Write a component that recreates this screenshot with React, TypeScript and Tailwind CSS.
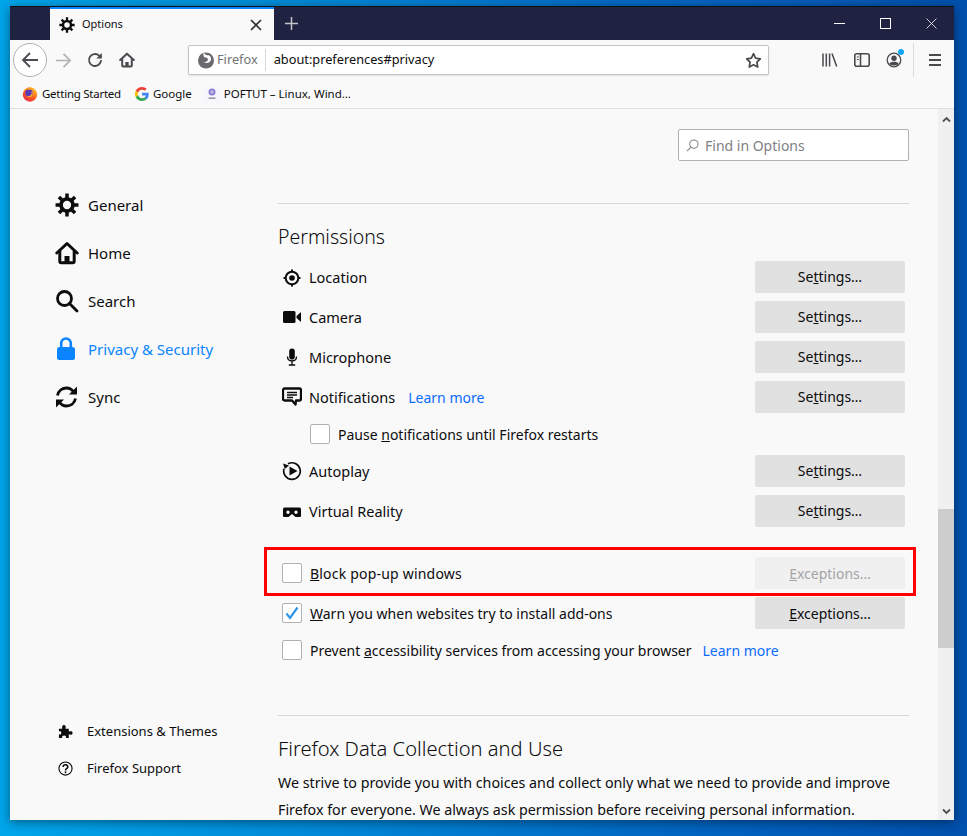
import type { ReactNode } from 'react';

function Gear({ size }: { size: number }) {
  return (
    <svg width={size} height={size} viewBox="0 0 22 22" fill="none" stroke="#0c0c0d">
      <circle cx="11" cy="11" r="5.500" strokeWidth="3.400" />
      <path
        strokeWidth="3.200"
        d="M11 .5v4M11 17.500v4M.5 11h4M17.500 11h4M3.600 3.600l2.900 2.900M15.500 15.500l2.900 2.900M18.400 3.600l-2.900 2.900M6.500 15.500l-2.900 2.900"
      />
    </svg>
  );
}

function HomeIcon({ size, color }: { size: number; color: string }) {
  return (
    <svg width={size} height={size} viewBox="0 0 24 24" fill="none" stroke={color} strokeWidth="3" strokeLinejoin="round">
      <path d="M1.800 12 12 2.500 22.200 12" strokeLinecap="round" />
      <path d="M4.800 10v10.200a1.500 1.500 0 0 0 1.500 1.500h11.400a1.500 1.500 0 0 0 1.500-1.500V10" />
      <rect x="9.500" y="15" width="5" height="7" fill={color} stroke="none" />
    </svg>
  );
}

function Firefox() {
  return (
    <svg width="16" height="16" viewBox="0 0 16 16">
      <defs>
        <linearGradient id="ff" x1="0.8" y1="0" x2="0.2" y2="1">
          <stop offset="0" stopColor="#ffcb2d" />
          <stop offset="0.5" stopColor="#ff6a1f" />
          <stop offset="1" stopColor="#e5203f" />
        </linearGradient>
      </defs>
      <circle cx="8" cy="8.500" r="7.200" fill="url(#ff)" />
      <circle cx="7" cy="7" r="3.800" fill="#5a3bb5" />
      <path d="M3 4c2-3.500 7-3.500 9 0-2-1-3-1-4 0-2-1-4-1-5 0z" fill="#ff9a24" />
      <path d="M9 5c2 1 2.500 4 .5 5.500C8 11.500 5 11 4 9c1 1 3 1.500 4.500.5C10 8.500 10 6 9 5z" fill="#ffb526" />
    </svg>
  );
}

function GoogleG() {
  return (
    <svg width="14" height="14" viewBox="0 0 48 48">
      <path fill="#ea4335" d="M24 9.500c3.500 0 6.700 1.200 9.200 3.600l6.900-6.900C35.900 2.400 30.500 0 24 0 14.600 0 6.500 5.400 2.600 13.200l8 6.200C12.500 13.700 17.800 9.500 24 9.500z" />
      <path fill="#4285f4" d="M47 24.500c0-1.600-.1-3.100-.4-4.500H24v9h12.900c-.6 3-2.200 5.400-4.700 7.100l7.700 6C44.400 38 47 31.800 47 24.500z" />
      <path fill="#fbbc05" d="M10.600 28.600a14.500 14.500 0 0 1 0-9.200l-8-6.200a24 24 0 0 0 0 21.600z" />
      <path fill="#34a853" d="M24 48c6.500 0 11.900-2.100 15.900-5.900l-7.700-6c-2.200 1.400-4.900 2.300-8.200 2.300-6.200 0-11.500-4.200-13.400-9.800l-8 6.200C6.500 42.600 14.600 48 24 48z" />
    </svg>
  );
}

function Poftut() {
  return (
    <svg width="16" height="16" viewBox="0 0 16 16">
      <rect width="16" height="16" fill="#f6f6fb" />
      <circle cx="8" cy="6" r="3.500" fill="#8d7fd0" />
      <path d="M6 6h4M8 4v4" stroke="#d9d4f2" strokeWidth="0.8" />
      <rect x="4.500" y="11.500" width="7" height="1.400" fill="#8a8aa0" />
    </svg>
  );
}

function PermissionIcon({ name }: { name: string }) {
  const c = '#0c0c0d';
  if (name === 'Location')
    return (
      <svg className="mt-[1px]" width="18" height="18" viewBox="0 0 18 18" fill="none">
        <circle cx="9" cy="9" r="6.300" stroke={c} strokeWidth="2" />
        <circle cx="9" cy="9" r="2.800" fill={c} />
        <path d="M9 .500v2.500M9 15v2.500M.500 9H3M15 9h2.500" stroke={c} strokeWidth="2" />
      </svg>
    );
  if (name === 'Camera')
    return (
      <svg width="18" height="18" viewBox="0 0 18 18" fill={c}>
        <rect x="0" y="3" width="12.500" height="12" rx="1.500" />
        <path d="M13.500 8 18 4v10l-4.500-4z" />
      </svg>
    );
  if (name === 'Microphone')
    return (
      <svg width="18" height="18" viewBox="0 0 18 18" fill="none">
        <rect x="6.200" y="0.500" width="5.600" height="11" rx="2.800" fill={c} />
        <path d="M4.500 8.500c0 6 9 6 9 0M9 13.500v3M5.800 17h6.400" stroke={c} strokeWidth="1.300" />
      </svg>
    );
  if (name === 'Notifications')
    return (
      <svg className="ml-[-1px]" width="20" height="20" viewBox="0 0 20 20" fill="none">
        <path d="M2.500 1.500h15a1.500 1.500 0 0 1 1.500 1.500v9a1.500 1.500 0 0 1-1.500 1.500H14l-.5 4-3.500-4H2.500A1.500 1.500 0 0 1 1 12V3a1.500 1.500 0 0 1 1.500-1.500z" stroke={c} strokeWidth="2.300" strokeLinejoin="round" />
        <path d="M5 5.500h10M5 8h10M5 10.500h6" stroke={c} strokeWidth="1.400" />
      </svg>
    );
  if (name === 'Autoplay')
    return (
      <svg className="ml-[-1px]" width="20" height="20" viewBox="0 0 20 20" fill="none">
        <path d="M6 2.800a8.300 8.300 0 1 1-4 5" stroke={c} strokeWidth="1.700" />
        <path d="M1 2.500 2.800 8 7 4.500z" fill={c} />
        <path d="M7.500 5.500 15.500 10l-8 4.500z" fill={c} />
      </svg>
    );
  return (
    <svg className="mt-[2px]" width="18" height="18" viewBox="0 0 18 18" fill={c}>
      <path
        fillRule="evenodd"
        d="M1.500 4.500h15a1.500 1.500 0 0 1 1.500 1.500v7a1 1 0 0 1-1 1h-4.500l-2-1.800a2 2 0 0 0-3 0l-2 1.800H1a1 1 0 0 1-1-1V6a1.500 1.500 0 0 1 1.500-1.500zM5 7.500a1.700 1.700 0 1 0 0 3.400 1.700 1.700 0 0 0 0-3.400zm8 0a1.700 1.700 0 1 0 0 3.400 1.700 1.700 0 0 0 0-3.400z"
      />
    </svg>
  );
}

function Checkbox({ checked }: { checked?: boolean }) {
  return (
    <span className="flex h-5 w-5 shrink-0 items-center justify-center rounded-[2px] border border-[#b1b1b3] bg-white">
      {checked && (
        <svg width="16" height="16" viewBox="0 0 16 16" fill="none" stroke="#2e95e8" strokeWidth="2.200">
          <path d="M2.500 8.500 6 13 13.500 2.500" />
        </svg>
      )}
    </span>
  );
}

function SideButton({ children, disabled }: { children: ReactNode; disabled?: boolean }) {
  return (
    <span
      className={`ml-auto mr-1 flex h-8 w-[150px] shrink-0 items-center justify-center rounded-[2px] ${
        disabled ? 'bg-[#f0f0f1] text-[#a4a4a6]' : 'bg-[#e1e1e2] text-[#0c0c0d]'
      }`}
    >
      {children}
    </span>
  );
}

const settingsLabel = (
  <span className="pb-[2px]">
    Se<u>t</u>tings…
  </span>
);

const exceptionsLabel = (
  <>
    <u>E</u>xceptions…
  </>
);

function PermissionRow({ name, extra }: { name: string; extra?: ReactNode }) {
  return (
    <div className="mb-2 flex h-8 items-center">
      <span className="flex w-[31px] shrink-0 items-center pl-[5px]">
        <PermissionIcon name={name} />
      </span>
      <span className="pt-[1px] text-[14.5px]">{name}</span>
      {extra}
      <SideButton>{settingsLabel}</SideButton>
    </div>
  );
}

function Category({ icon, label, active }: { icon: ReactNode; label: string; active?: boolean }) {
  return (
    <div className={`flex h-12 items-center ${active ? 'text-[#0a84ff]' : 'text-[#0c0c0d]'}`}>
      <span className="flex w-[33px] shrink-0 items-center">{icon}</span>
      <span className="text-[15px]">{label}</span>
    </div>
  );
}

export default function App() {
  return (
    <div
      className="h-[836px] w-[967px] overflow-hidden bg-[linear-gradient(90deg,#00a6ea_0%,#0090dc_25%,#0065c2_70%,#0050ad_100%)] pl-[10px] pt-[6px] text-[14px] text-[#0c0c0d]"
      style={{ fontFamily: '"Noto Sans", "Open Sans", sans-serif' }}
    >
      <div className="flex h-[814px] w-[944px] flex-col border-t border-[#101010] bg-[#f9f9fa] shadow-[0_2px_10px_rgba(0,0,0,0.45)]">
        {/* Title bar */}
        <div className="flex h-[33px] shrink-0 items-stretch bg-[#1f2240] pl-10 text-white">
          <div className="flex w-[224px] items-center border-t-2 border-[#0a84ff] bg-[#f9f9fa] pl-[9px] pr-3 text-[#0c0c0d]">
            <Gear size={16} />
            <span className="ml-[7px] text-[11px]">Options</span>
            <svg className="ml-auto" width="12" height="12" viewBox="0 0 12 12" stroke="#303033" strokeWidth="1.700">
              <path d="M1 1l10 10M11 1 1 11" />
            </svg>
          </div>
          <div className="flex w-[34px] items-center justify-center">
            <svg width="15" height="15" viewBox="0 0 15 15" stroke="#c4c4cc" strokeWidth="1.500">
              <path d="M7.500 1v13M1 7.500h13" />
            </svg>
          </div>
          <div className="ml-auto flex items-center">
            <span className="flex w-[46px] justify-center">
              <svg width="11" height="11" viewBox="0 0 11 11" stroke="#fff" strokeWidth="1">
                <path d="M0 5.500h11" />
              </svg>
            </span>
            <span className="flex w-[46px] justify-center">
              <svg width="11" height="11" viewBox="0 0 11 11" fill="none" stroke="#fff" strokeWidth="1">
                <rect x="0.500" y="0.500" width="10" height="10" />
              </svg>
            </span>
            <span className="flex w-[46px] justify-center">
              <svg width="11" height="11" viewBox="0 0 11 11" stroke="#fff" strokeWidth="0.800">
                <path d="M.5.500l10 10M10.500.500l-10 10" />
              </svg>
            </span>
          </div>
        </div>

        {/* Toolbar */}
        <div className="flex h-[40px] shrink-0 items-center pl-[3px]">
          <span className="flex h-[34px] w-[34px] items-center justify-center rounded-full border border-[#b1b1b3] bg-white">
            <svg width="18" height="18" viewBox="0 0 18 18" fill="none" stroke="#4a4a4f" strokeWidth="1.800">
              <path d="M17 9H2M9 2 2 9l7 7" />
            </svg>
          </span>
          <span className="ml-[7px] flex w-[18px] justify-center">
            <svg width="17" height="17" viewBox="0 0 18 18" fill="none" stroke="#b1b1b3" strokeWidth="1.800">
              <path d="M1 9h15M9 2l7 7-7 7" />
            </svg>
          </span>
          <span className="ml-[15px] flex w-4 justify-center">
            <svg width="16" height="16" viewBox="0 0 16 16" fill="none" stroke="#4a4a4f" strokeWidth="1.800">
              <path d="M14 8a6 6 0 1 1-1.800-4.300L14 5.500" />
              <path d="M14.800 1v5.500H9.300z" fill="#4a4a4f" stroke="none" />
            </svg>
          </span>
          <span className="ml-4 flex w-4 justify-center">
            <HomeIcon size={16} color="#4a4a4f" />
          </span>
          <div className="ml-[53px] flex h-[30px] w-[581px] items-center rounded-[2px] border border-[#c4c4c6] bg-white shadow-[0_1px_2px_rgba(0,0,0,0.1)]">
            <svg className="ml-2" width="18" height="18" viewBox="0 0 18 18">
              <circle cx="9" cy="9.500" r="8" fill="#6a6a6e" />
              <path d="M6.500 1.500c1 2.200 3.300 2.800 5 2.800 2.200.6 3.300 3.300 2.200 5.500a4.400 4.400 0 0 1-7.200.6c1.700 1.100 4.400.5 4.400-2.200 0-1.100-1.100-1.700-2.800-1.700C7 6.500 6 4.500 6.500 1.500z" fill="#fff" />
            </svg>
            <span className="ml-[2px] text-[12.75px] text-[#737373]">Firefox</span>
            <span className="ml-[7px] h-[22px] w-px bg-[#d7d7db]" />
            <span className="ml-2 text-[12.75px] text-[#0c0c0d]">about:preferences#privacy</span>
            <svg className="ml-auto mr-[6px]" width="17" height="17" viewBox="0 0 18 18" fill="none" stroke="#4a4a4f" strokeWidth="1.800" strokeLinejoin="round">
              <path d="M9 1.800l2.200 4.700 5 .7-3.600 3.600.9 5.100L9 13.500l-4.500 2.400.9-5.100L1.800 7.200l5-.7z" />
            </svg>
          </div>
          <span className="ml-[53px] flex w-4 justify-center">
            <svg width="16" height="16" viewBox="0 0 16 16" stroke="#4a4a4f" strokeWidth="1.500">
              <path d="M1 1.500v13M4.300 1.500v13M7.600 1.500v13M10 1.500l4.700 13" />
            </svg>
          </span>
          <span className="ml-4 flex w-4 justify-center">
            <svg width="16" height="16" viewBox="0 0 16 16" fill="none" stroke="#4a4a4f" strokeWidth="1.600">
              <rect x="0.800" y="1.800" width="14.400" height="12.400" rx="2" />
              <path d="M6.500 2v12" />
              <path d="M2.800 5h2M2.800 7.500h2" strokeWidth="1.100" />
            </svg>
          </span>
          <span className="relative ml-4 flex w-4 justify-center">
            <svg width="16" height="16" viewBox="0 0 16 16" fill="none">
              <circle cx="8" cy="8" r="6.800" stroke="#4a4a4f" strokeWidth="1.300" />
              <circle cx="8" cy="6.300" r="2.700" fill="#4a4a4f" />
              <path d="M3.300 11.800c1.500-2.600 7.900-2.600 9.400 0C11.500 14 4.500 14 3.300 11.800z" fill="#4a4a4f" />
            </svg>
            <span className="absolute right-[-2px] top-[-3px] h-[6px] w-[6px] rounded-full bg-[#0ea5f5]" />
          </span>
          <span className="ml-[11px] h-[34px] w-px bg-[#dcdcde]" />
          <span className="ml-[15px] flex w-3 flex-col gap-[3px]">
            <span className="h-[2px] bg-[#4a4a4f]" />
            <span className="h-[2px] bg-[#4a4a4f]" />
            <span className="h-[2px] bg-[#4a4a4f]" />
          </span>
        </div>

        {/* Bookmarks */}
        <div className="flex h-[29px] shrink-0 items-center border-b border-[#dfdfe0] pl-3 text-[11.5px]">
          <Firefox />
          <span className="ml-[4px] tracking-[-0.25px]">Getting Started</span>
          <span className="ml-[14px] flex">
            <GoogleG />
          </span>
          <span className="ml-[4px]">Google</span>
          <span className="ml-[12px] flex">
            <Poftut />
          </span>
          <span className="ml-[4px]">POFTUT – Linux, Wind…</span>
        </div>

        {/* Page */}
        <div className="flex min-h-0 flex-1">
          <div className="flex w-[268px] shrink-0 flex-col pb-[33px] pl-[45px] pt-[72px]">
            <Category icon={<Gear size={24} />} label="General" />
            <Category icon={<HomeIcon size={24} color="#0c0c0d" />} label="Home" />
            <Category
              icon={
                <svg width="24" height="24" viewBox="0 0 24 24" fill="none" stroke="#0c0c0d" strokeWidth="2.800">
                  <circle cx="9.500" cy="9.500" r="7" />
                  <path d="M14.500 14.500 22 22" strokeLinecap="round" />
                </svg>
              }
              label="Search"
            />
            <Category
              active
              icon={
                <svg width="24" height="24" viewBox="0 -1 24 24" fill="#0a84ff">
                  <path d="M6.200 10V5.300a4.800 4.800 0 0 1 9.600 0V10" fill="none" stroke="#0a84ff" strokeWidth="2.600" />
                  <rect x="2" y="9" width="18" height="13" rx="2.500" />
                </svg>
              }
              label="Privacy & Security"
            />
            <Category
              icon={
                <svg width="24" height="24" viewBox="0 0 24 24" fill="none" stroke="#0c0c0d" strokeWidth="2.800">
                  <path d="M2.500 10.500C3.500 5.500 7.500 3 11.500 3c3 0 5.500 1.500 7 4" />
                  <path d="M20.500 13.500c-1 5-5 7.500-9 7.500-3 0-5.500-1.500-7-4" />
                  <path d="M22 1.500v8h-8z" fill="#0c0c0d" stroke="none" />
                  <path d="M1 22.500v-8h8z" fill="#0c0c0d" stroke="none" />
                </svg>
              }
              label="Sync"
            />
            <div className="mt-auto flex h-[37px] items-center pl-[3px] text-[13px]">
              <svg width="15" height="15" viewBox="0 0 16 16" fill="#0c0c0d">
                <path d="M1 5h3.500C4 2 5 1 6.300 1S8.800 2 8 5h3.500v3c3-.6 4-.3 4 1.500S14.500 12 11.500 11v4H8.500c.5-2-.5-2.800-2-2.800S4 13 4.500 15H1v-4c2 .5 2.500-.4 2.500-1.500S3 7.500 1 8z" />
              </svg>
              <span className="ml-[14px]">Extensions &amp; Themes</span>
            </div>
            <div className="flex h-[37px] items-center pl-[3px] text-[13px]">
              <svg width="15" height="15" viewBox="0 0 16 16" fill="none" stroke="#0c0c0d" strokeWidth="1.200">
                <circle cx="8" cy="8" r="7" />
                <path d="M5.500 6.300C5.500 3.300 10.500 3.300 10.500 6.200c0 2-2.500 2-2.500 3.800" strokeWidth="1.600" />
                <circle cx="8" cy="12" r="1" fill="#0c0c0d" stroke="none" />
              </svg>
              <span className="ml-[14px]">Firefox Support</span>
            </div>
          </div>

          <div className="relative min-w-0 w-[631px] shrink-0 overflow-visible pt-5">
            <div className="ml-auto flex h-8 w-[231px] items-center rounded-[2px] border border-[#b1b1b3] bg-white pl-[7px] text-[#7f7f85]">
              <svg width="13" height="13" viewBox="0 0 14 14" fill="none" stroke="#808085" strokeWidth="1.100">
                <circle cx="8.500" cy="5.500" r="4.500" />
                <path d="M5.200 8.800 1 13" />
              </svg>
              <span className="ml-[6px]">Find in Options</span>
            </div>
            <div className="mt-[42px] border-t border-[#d7d7db]" />
            <h1 className="mt-[18px] flex h-[30px] items-center text-[19.5px] font-light leading-none">Permissions</h1>
            <div className="mt-[9px]">
              <PermissionRow name="Location" />
              <PermissionRow name="Camera" />
              <PermissionRow name="Microphone" />
              <PermissionRow
                name="Notifications"
                extra={<a className="ml-[13px] pt-[1px] text-[#0a6cff]">Learn more</a>}
              />
            </div>
            <div className="mb-[7px] flex h-[27px] items-center pb-[1px] pl-8">
              <Checkbox />
              <span className="ml-2">
                Pause <u>n</u>otifications until Firefox restarts
              </span>
            </div>
            <PermissionRow name="Autoplay" />
            <PermissionRow name="Virtual Reality" />

            <div className="mt-[30px] flex h-8 items-center pl-1">
              <Checkbox />
              <span className="ml-2 tracking-[0.2px]">
                <u>B</u>lock pop-up windows
              </span>
              <SideButton disabled>{exceptionsLabel}</SideButton>
            </div>
            <div className="mt-2 flex h-8 items-center pl-1">
              <Checkbox checked />
              <span className="ml-2">
                <u>W</u>arn you when websites try to install add-ons
              </span>
              <SideButton>{exceptionsLabel}</SideButton>
            </div>
            <div className="mt-2 flex h-[26px] items-center pl-1">
              <Checkbox />
              <span className="ml-2">
                Prevent <u>a</u>ccessibility services from accessing your browser
              </span>
              <a className="ml-[11px] text-[#0a6cff]">Learn more</a>
            </div>

            <div className="mt-[52px] border-t border-[#d7d7db]" />
            <h2 className="mt-[17px] flex h-[30px] items-center text-[20.15px] font-light leading-none">Firefox Data Collection and Use</h2>
            <p className="mt-[6px] whitespace-nowrap text-[14.25px] leading-[27px]">
              We strive to provide you with choices and collect only what we need to provide and improve
              <br />
              Firefox for everyone. We always ask permission before receiving personal information.
            </p>

            {/* Highlight drawn over the screenshot */}
            <div className="absolute left-[-14px] top-[438px] h-[49px] w-[652px] border-[3px] border-[#ff0000]" />
          </div>

          <div className="ml-auto flex w-4 shrink-0 flex-col items-center bg-[#f0f0f0]">
            <svg className="mt-[6px]" width="9" height="9" viewBox="0 0 9 9" fill="none" stroke="#505050" strokeWidth="1.800">
              <path d="M1 6.500 4.500 3 8 6.500" />
            </svg>
            <div className="mt-[385px] h-[139px] w-full bg-[#cdcdcd]" />
            <svg className="mt-auto mb-[4px]" width="9" height="9" viewBox="0 0 9 9" fill="none" stroke="#505050" strokeWidth="1.800">
              <path d="M1 2.500 4.500 6 8 2.500" />
            </svg>
          </div>
        </div>
      </div>
    </div>
  );
}
